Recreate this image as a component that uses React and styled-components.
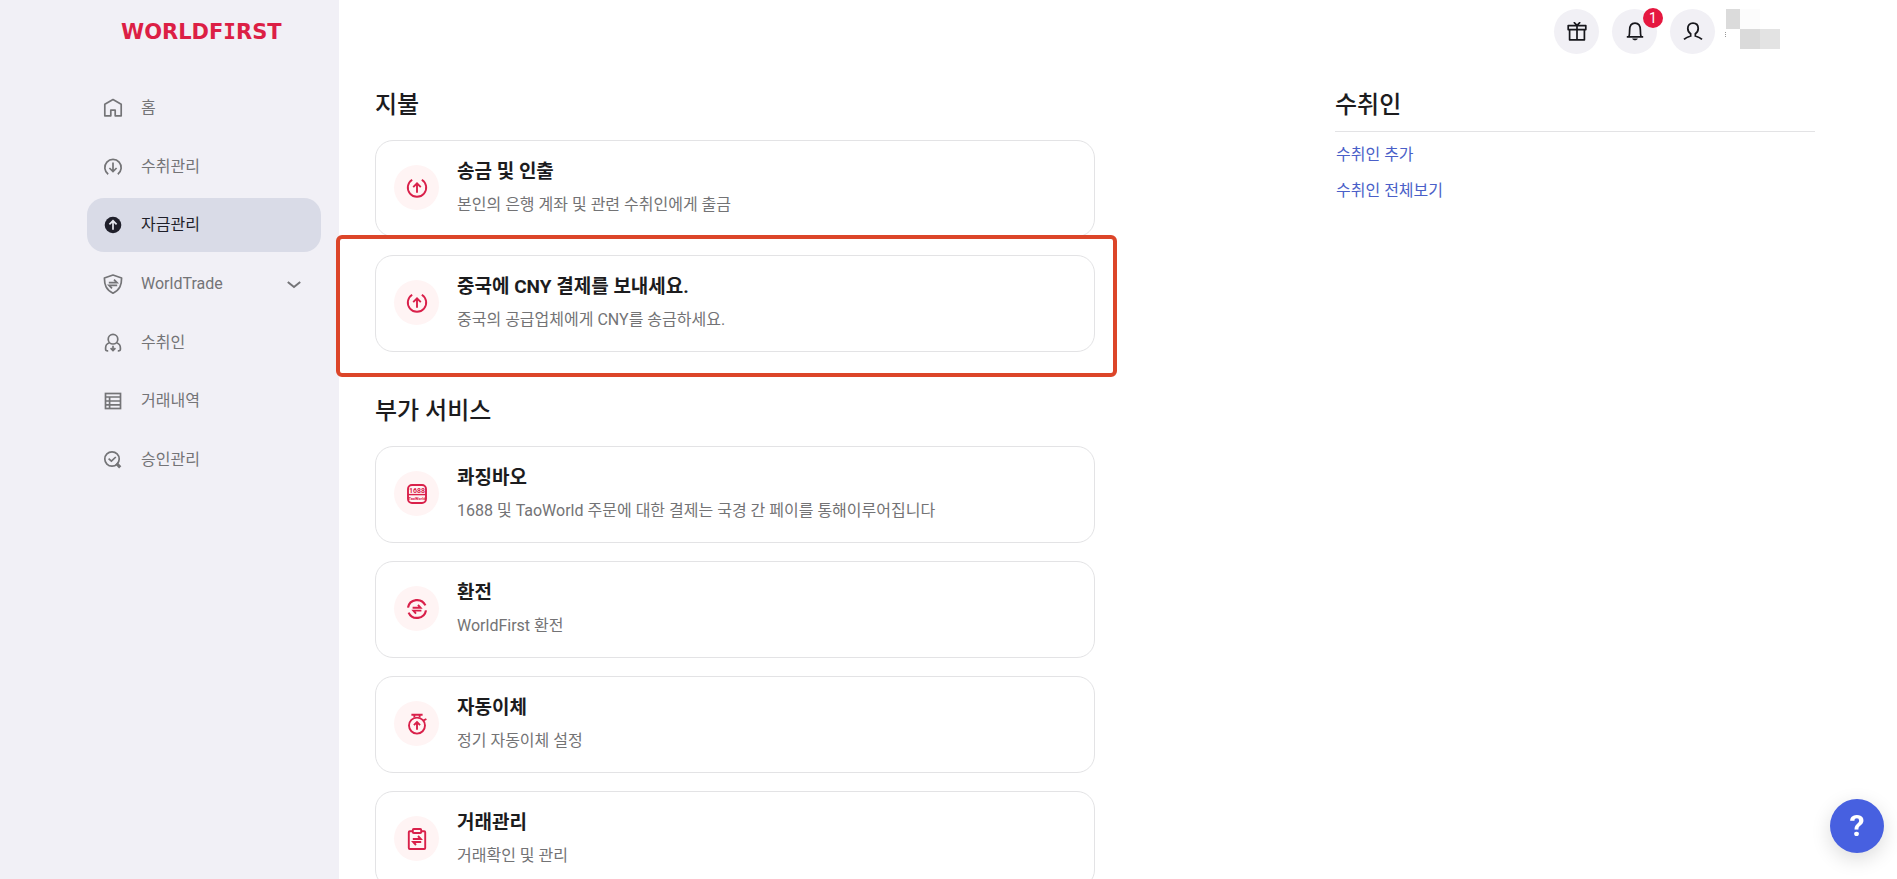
import React from "react";
import styled, { createGlobalStyle, css } from "styled-components";

const GlobalStyle = createGlobalStyle`
  *, *::before, *::after { box-sizing: border-box; }
  body {
    margin: 0;
    background: #ffffff;
    color: #1c1c1e;
    font-family: Roboto, "Noto Sans CJK KR", sans-serif;
    font-size: 16px;
    line-height: 24px;
  }
  h1, h2, h3, p, ul { margin: 0; padding: 0; }
  ul { list-style: none; }
  a { text-decoration: none; }
  button { font: inherit; border: 0; padding: 0; cursor: pointer; }
`;

const Shell = styled.div`
  display: flex;
  height: 100vh;
  overflow: hidden;
`;

const Sidebar = styled.aside`
  flex: 0 0 339px;
  display: flex;
  flex-direction: column;
  padding: 16px 18px 0 87px;
  background: #f1f0f6;
`;

const Brand = styled.a`
  margin: 0 0 32px 34px;
  color: #dc1f45;
  font: bold 21px/33px "DejaVu Sans", sans-serif;
`;

const SlabLetter = styled.span`
  font-family: "DejaVu Sans Mono", monospace;
`;

const NavList = styled.ul`
  display: flex;
  flex-direction: column;
  justify-content: space-between;
  height: 406px;
`;

const NavLink = styled.a`
  display: flex;
  align-items: center;
  gap: 18px;
  height: 54px;
  padding: 0 20px 0 16px;
  border-radius: 17px;
  color: #747477;
  ${(p) =>
    p.$active &&
    css`
      background: #d9dbe7;
      color: #1f1f2a;
    `}
`;

const NavLabel = styled.span`
  flex: 1;
`;

const Icon = styled.svg`
  display: block;
  flex: none;
  width: ${(p) => p.$size || 20}px;
  height: ${(p) => p.$size || 20}px;
  fill: none;
  stroke: currentColor;
  stroke-width: ${(p) => p.$weight || 1.7};
`;

const Main = styled.main`
  flex: 1;
  min-width: 0;
`;

const TopBar = styled.header`
  display: flex;
  justify-content: flex-end;
  gap: 13px;
  height: 62px;
  padding: 9px 117px 0 0;
`;

const RoundButton = styled.button`
  position: relative;
  display: grid;
  place-items: center;
  width: 45px;
  height: 45px;
  border-radius: 50%;
  background: #f1f0f5;
  color: #17171c;
`;

const Badge = styled.span`
  position: absolute;
  top: -1px;
  right: -6px;
  width: 20px;
  height: 20px;
  border-radius: 50%;
  background: #e5173f;
  color: #ffffff;
  font-size: 14px;
  line-height: 20px;
  text-align: center;
`;

const Account = styled.div`
  display: flex;
  margin-left: -3px;
`;

const Columns = styled.div`
  display: grid;
  grid-template-columns: 6fr 4fr;
  column-gap: calc(100% / 6);
  align-items: start;
  padding: 24px 82px 0 36px;
`;

const Section = styled.section`
  margin-bottom: 40px;
`;

const Heading = styled.h2`
  font-size: 24px;
  font-weight: 500;
  line-height: 38px;
`;

const CardList = styled.ul`
  display: flex;
  flex-direction: column;
  gap: 18px;
  margin-top: 16px;
`;

const CardItem = styled.li`
  position: relative;
`;

const Card = styled.a`
  display: flex;
  align-items: center;
  gap: 18px;
  height: 97px;
  padding: 0 18px 2px;
  border: 1px solid #e3e3e5;
  border-radius: 18px;
  color: inherit;
`;

const CardIcon = styled.span`
  display: grid;
  place-items: center;
  width: 45px;
  height: 45px;
  border-radius: 50%;
  background: #fff4f4;
  color: #d9204a;
`;

const CardText = styled.div`
  display: flex;
  flex-direction: column;
  gap: 8px;
`;

const CardTitle = styled.h3`
  font-size: 19px;
  font-weight: 700;
  line-height: 26px;
`;

const CardNote = styled.p`
  color: #737375;
`;

const Highlight = styled.div`
  position: absolute;
  inset: -20px -22px -25px -39px;
  border: 4px solid #dc4529;
  border-radius: 6px;
  pointer-events: none;
`;

const LinkList = styled.ul`
  display: flex;
  flex-direction: column;
  gap: 12px;
  margin-top: 7px;
  padding: 11px 0 0 1px;
  border-top: 1px solid #e3e3e5;
`;

const TextLink = styled.a`
  color: #4a5fc8;
`;

const HelpButton = styled.button`
  position: fixed;
  right: 13px;
  bottom: 26px;
  width: 54px;
  height: 54px;
  border-radius: 50%;
  background: #4760e0;
  color: #ffffff;
  font-size: 30px;
  font-weight: 700;
  line-height: 54px;
  box-shadow: 0 6px 20px rgba(0, 0, 0, 0.14);
`;

const navIcons = {
  home: <path d="M1.800 6.200 10 1.600l8.200 4.600v11.600h-6v-5.600H7.800v5.600h-6z" strokeLinejoin="round" />,
  receive: (
    <>
      <path d="M5.200 17.200a8.200 8.200 0 1 1 9.600 0" />
      <path d="M10 5.500v9M6.400 11l3.600 3.600 3.600-3.600" />
    </>
  ),
  funds: (
    <>
      <circle cx="10" cy="10" r="8.300" fill="currentColor" stroke="none" />
      <path d="M10 14.800V6M6.400 9.400 10 5.800l3.600 3.600" stroke="#e6e7ef" />
    </>
  ),
  trade: (
    <>
      <path d="M10 1 18.600 4c0 7-1.600 11.800-8.600 15.200C3 15.800 1.400 11 1.400 4z" strokeLinejoin="round" />
      <path d="M5.800 8.600h8.200L11 5.600M14.200 11.400H6l3 3" />
    </>
  ),
  payee: (
    <>
      <circle cx="10" cy="6.200" r="4.800" />
      <path d="M6.400 9.800C3.800 10.600 2.600 12.400 2.600 15v1.200q0 1.800 2.600 1.600M13.600 9.800c2.600.800 3.800 2.600 3.800 5.200v1.200q0 1.800-2.600 1.600" />
      <path d="M10 12.800v4.800M7.600 15.200l2.400 2.400 2.400-2.400" />
    </>
  ),
  history: (
    <>
      <rect x="2.500" y="2.500" width="15" height="15" />
      <path d="M2.500 6h15M2.500 10h15M2.500 13.800h15M6.600 6v11.500" />
    </>
  ),
  approve: (
    <>
      <circle cx="9" cy="9" r="7.200" />
      <path d="M5.600 8.600 8.400 11.200l4.400-4.200" />
      <path d="m13.400 13.400 3.800 4" strokeWidth="3" />
    </>
  ),
};

const navItems = [
  { icon: "home", label: "홈" },
  { icon: "receive", label: "수취관리" },
  { icon: "funds", label: "자금관리", active: true },
  { icon: "trade", label: "WorldTrade", expandable: true },
  { icon: "payee", label: "수취인" },
  { icon: "history", label: "거래내역" },
  { icon: "approve", label: "승인관리" },
];

const cardIcons = {
  send: (
    <>
      <path d="M6.200 2.700a9.200 9.200 0 1 0 9.600 0" />
      <path d="M11 15.800V7M7.200 10.200 11 6.400l3.800 3.800" />
    </>
  ),
  store: (
    <>
      <rect x="2" y="2" width="18" height="18" rx="4" />
      <path d="M2 11.600h18" strokeWidth="1.400" />
      <text x="11" y="9.600" textAnchor="middle" fontSize="7" fontWeight="700" fill="currentColor" stroke="none">
        1688
      </text>
      <text x="11" y="17" textAnchor="middle" fontSize="4" fontWeight="700" fill="currentColor" stroke="none">
        TaoWorld
      </text>
    </>
  ),
  exchange: (
    <>
      <path d="M2 9.600a9.200 9.200 0 0 1 17.400-2.200M20 12.400A9.200 9.200 0 0 1 2.600 14.600" strokeWidth="2.200" />
      <path d="M6.600 9.800h8L12 6.800M15.400 12.600h-8l2.600 3" />
    </>
  ),
  auto: (
    <>
      <circle cx="11" cy="12.600" r="8" />
      <path d="M5.400 1.800h11.200M8.400 2v2.600M13.600 2v2.600M17.600 7.400l2.800-1.400" />
      <path d="M11 16.800V9.600M7.900 12.200 11 9.100l3.100 3.100" />
    </>
  ),
  orders: (
    <>
      <rect x="2.800" y="3.200" width="16.400" height="17.800" rx="1" />
      <rect x="6.800" y="1" width="8.400" height="4" rx="1" fill="#fff4f4" />
      <path d="M6.800 11h8L12 8M15.200 14H7.200l2.800 3" />
    </>
  ),
};

const payments = [
  { icon: "send", title: "송금 및 인출", note: "본인의 은행 계좌 및 관련 수취인에게 출금" },
  {
    icon: "send",
    title: "중국에 CNY 결제를 보내세요.",
    note: "중국의 공급업체에게 CNY를 송금하세요.",
    highlighted: true,
  },
];

const services = [
  {
    icon: "store",
    title: "콰징바오",
    note: "1688 및 TaoWorld 주문에 대한 결제는 국경 간 페이를 통해이루어집니다",
  },
  { icon: "exchange", title: "환전", note: "WorldFirst 환전" },
  { icon: "auto", title: "자동이체", note: "정기 자동이체 설정" },
  { icon: "orders", title: "거래관리", note: "거래확인 및 관리" },
];

function ServiceSection({ title, items }) {
  return (
    <Section>
      <Heading>{title}</Heading>
      <CardList>
        {items.map((item) => (
          <CardItem key={item.title}>
            <Card href="#">
              <CardIcon>
                <Icon viewBox="0 0 22 22" $size={22} $weight={1.9} aria-hidden="true">
                  {cardIcons[item.icon]}
                </Icon>
              </CardIcon>
              <CardText>
                <CardTitle>{item.title}</CardTitle>
                <CardNote>{item.note}</CardNote>
              </CardText>
            </Card>
            {item.highlighted && <Highlight />}
          </CardItem>
        ))}
      </CardList>
    </Section>
  );
}

export default function App() {
  return (
    <>
      <GlobalStyle />
      <Shell>
        <Sidebar>
          <Brand href="#">
            WORLDF<SlabLetter>I</SlabLetter>RST
          </Brand>
          <nav>
            <NavList>
              {navItems.map((item) => (
                <li key={item.label}>
                  <NavLink href="#" $active={item.active} aria-current={item.active ? "page" : undefined}>
                    <Icon viewBox="0 0 20 20" aria-hidden="true">
                      {navIcons[item.icon]}
                    </Icon>
                    <NavLabel>{item.label}</NavLabel>
                    {item.expandable && (
                      <Icon viewBox="0 0 14 14" $size={14} $weight={2} aria-hidden="true">
                        <path d="m.800 5 6.200 5 6.200-5" />
                      </Icon>
                    )}
                  </NavLink>
                </li>
              ))}
            </NavList>
          </nav>
        </Sidebar>
        <Main>
          <TopBar>
            <RoundButton type="button" aria-label="선물">
              <Icon viewBox="0 0 20 20" aria-hidden="true">
                <path d="M1.200 3.600h17.600v4H1.200zM2.600 7.600v10.200h14.800V7.600M10 3.600v14.200M6.800.200 10 3.400 13.200.200" strokeLinejoin="round" />
              </Icon>
            </RoundButton>
            <RoundButton type="button" aria-label="알림">
              <Icon viewBox="0 0 20 20" aria-hidden="true">
                <path d="M1.800 14.800h16.400M4 14.600c.600-2 .600-3.600.600-6.200C4.600 3.600 6.800 1.200 10 1.200s5.400 2.400 5.400 7.200c0 2.600 0 4.200.600 6.200" strokeLinejoin="round" />
                <path d="M7.200 16.400h5.600c-.600 2.400-5 2.400-5.600 0z" fill="currentColor" stroke="none" />
              </Icon>
              <Badge>1</Badge>
            </RoundButton>
            <RoundButton type="button" aria-label="계정">
              <Icon viewBox="0 0 20 20" $weight={1.8} aria-hidden="true">
                <path d="M1 17.400c1.800-1.600 3.800-2.400 6.600-3.400v-2.200C5.800 10.600 4.800 8.600 4.800 6.600c0-3.400 2-5.400 5.200-5.400s5.200 2 5.200 5.400c0 2-1 4-2.800 5.200V14c2.800 1 4.800 1.800 6.600 3.400" />
              </Icon>
            </RoundButton>
            <Account>
              <svg width="55" height="40" viewBox="0 0 55 40" aria-hidden="true">
                <path d="M1 0h14v20H1z" fill="#dbdbdb" />
                <path d="M15 0h20v20H15z" fill="#fcfcfc" />
                <path d="M15 20h20v20H15z" fill="#dadada" />
                <path d="M35 20h20v20H35z" fill="#e3e3e3" />
                <path d="M0 23h1v1H0zM0 25h1v1H0zM0 27h1v1H0z" fill="#999999" />
              </svg>
            </Account>
          </TopBar>
          <Columns>
            <div>
              <ServiceSection title="지불" items={payments} />
              <ServiceSection title="부가 서비스" items={services} />
            </div>
            <section>
              <Heading>수취인</Heading>
              <LinkList>
                <li>
                  <TextLink href="#">수취인 추가</TextLink>
                </li>
                <li>
                  <TextLink href="#">수취인 전체보기</TextLink>
                </li>
              </LinkList>
            </section>
          </Columns>
        </Main>
      </Shell>
      <HelpButton type="button" aria-label="도움말">
        ?
      </HelpButton>
    </>
  );
}
